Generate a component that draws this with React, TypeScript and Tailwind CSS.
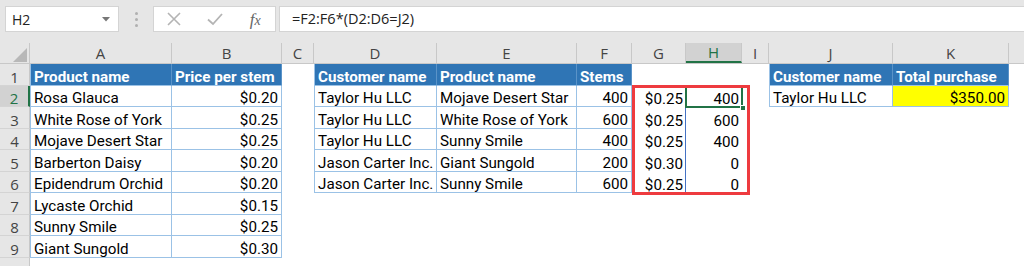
import React from "react";

type Cell = {
  text?: string;
  align?: "l" | "r";
  kind?: "none" | "head" | "body" | "yellow";
  first?: boolean;
};

const COLS = [
  { k: "A", w: 142 },
  { k: "B", w: 110 },
  { k: "C", w: 32 },
  { k: "D", w: 123 },
  { k: "E", w: 140 },
  { k: "F", w: 55 },
  { k: "G", w: 54 },
  { k: "H", w: 56 },
  { k: "I", w: 27 },
  { k: "J", w: 124 },
  { k: "K", w: 116 },
];

const tableA: [string, string][] = [
  ["Rosa Glauca", "$0.20"],
  ["White Rose of York", "$0.25"],
  ["Mojave Desert Star", "$0.25"],
  ["Barberton Daisy", "$0.20"],
  ["Epidendrum Orchid", "$0.20"],
  ["Lycaste Orchid", "$0.15"],
  ["Sunny Smile", "$0.25"],
  ["Giant Sungold", "$0.30"],
];

const tableD: [string, string, string, string, string][] = [
  ["Taylor Hu LLC", "Mojave Desert Star", "400", "$0.25", "400"],
  ["Taylor Hu LLC", "White Rose of York", "600", "$0.25", "600"],
  ["Taylor Hu LLC", "Sunny Smile", "400", "$0.25", "400"],
  ["Jason Carter Inc.", "Giant Sungold", "200", "$0.30", "0"],
  ["Jason Carter Inc.", "Sunny Smile", "600", "$0.25", "0"],
];

function buildRow(r: number): Cell[] {
  const cells: Cell[] = COLS.map(() => ({ kind: "none" }));
  if (r === 1) {
    cells[0] = { text: "Product name", kind: "head", first: true };
    cells[1] = { text: "Price per stem", kind: "head" };
  } else if (r >= 2 && r <= 9) {
    const d = tableA[r - 2];
    cells[0] = { text: d[0], kind: "body", first: true };
    cells[1] = { text: d[1], kind: "body", align: "r" };
  }
  if (r === 1) {
    cells[3] = { text: "Customer name", kind: "head", first: true };
    cells[4] = { text: "Product name", kind: "head" };
    cells[5] = { text: "Stems", kind: "head" };
  } else if (r >= 2 && r <= 6) {
    const d = tableD[r - 2];
    cells[3] = { text: d[0], kind: "body", first: true };
    cells[4] = { text: d[1], kind: "body" };
    cells[5] = { text: d[2], kind: "body", align: "r" };
    cells[6] = { text: d[3], kind: "none", align: "r" };
    cells[7] = { text: d[4], kind: "none", align: "r" };
  }
  if (r === 1) {
    cells[9] = { text: "Customer name", kind: "head", first: true };
    cells[10] = { text: "Total purchase", kind: "head" };
  } else if (r === 2) {
    cells[9] = { text: "Taylor Hu LLC", kind: "body", first: true };
    cells[10] = { text: "$350.00", kind: "yellow", align: "r" };
  }
  return cells;
}

function CellView({ c, w, col, r }: { c: Cell; w: number; col: number; r: number }) {
  let cls =
    "relative flex items-end shrink-0 h-full px-[3px] pb-0 leading-[16px] whitespace-nowrap overflow-visible ";
  if (c.kind === "head") {
    cls += "bg-[#2f75b5] text-white font-bold border-r border-b border-r-[#5a93c8] border-b-[#9bc2e6] ";
  } else if (c.kind === "body") {
    cls += "bg-white text-[#000] border-r border-b border-[#9bc2e6] ";
  } else if (c.kind === "yellow") {
    cls += "bg-[#ffff00] text-[#000] border-r border-b border-[#9bc2e6] ";
  } else {
    cls += "bg-white text-[#000] ";
  }
  if (c.first) cls += "border-l border-l-[#9bc2e6] ";
  cls += c.align === "r" ? "justify-end " : "justify-start ";
  const spill = col === 7 && r >= 2 && r <= 6;
  return (
    <div className={cls} style={{ width: w }}>
      {spill && (
        <div
          className={
            "absolute inset-y-0 left-[-1px] right-[-1px] border-l border-r border-[#4472c4] pointer-events-none " +
            (r === 6 ? "border-b" : "")
          }
        />
      )}
      <span className="relative">{c.text}</span>
    </div>
  );
}

function ColumnHeaders() {
  return (
    <div className="flex h-[21px] bg-[#e6e6e6] border-b border-[#c8c8c8] font-['Open_Sans','Noto_Sans',sans-serif] text-[15px] text-[#444]">
      <div className="relative w-[30px] shrink-0 border-r border-[#c8c8c8]">
        <svg className="absolute left-[13px] top-[5px]" width="15" height="14" viewBox="0 0 15 14">
          <polygon points="14,0 14,14 0,14" fill="#b8b8b8" />
        </svg>
      </div>
      {COLS.map((c) => (
        <div
          key={c.k}
          className={
            "shrink-0 flex items-center justify-center border-r border-[#c8c8c8] " +
            (c.k === "H" ? "bg-[#d2d2d2] text-[#217346] border-b-2 border-b-[#217346]" : "")
          }
          style={{ width: c.w }}
        >
          {c.k}
        </div>
      ))}
      <div className="flex-1" />
    </div>
  );
}

export default function App() {
  const rows = [1, 2, 3, 4, 5, 6, 7, 8, 9, 10];
  return (
    <div className="w-[1024px] h-[266px] overflow-hidden bg-white font-['Roboto',sans-serif]">
      <div className="h-[43px] bg-[#e6e6e6] flex items-start pt-[6px] pl-[5px]">
        <div className="w-[114px] h-[26px] bg-white border border-[#d4d4d4] flex items-center pl-[6px] pr-[8px] font-['Open_Sans','Noto_Sans',sans-serif] text-[14px] text-[#222]">
          <span className="flex-1">H2</span>
          <svg width="8" height="5" viewBox="0 0 8 5">
            <polygon points="0,0 8,0 4,4.5" fill="#777" />
          </svg>
        </div>
        <div className="w-[34px] h-[26px] flex flex-col items-center justify-center gap-[3px]">
          <div className="w-[3px] h-[3px] rounded-full bg-[#b0b0b0]" />
          <div className="w-[3px] h-[3px] rounded-full bg-[#b0b0b0]" />
          <div className="w-[3px] h-[3px] rounded-full bg-[#b0b0b0]" />
        </div>
        <div className="w-[123px] h-[26px] bg-white border border-[#d4d4d4] flex items-center">
          <div className="w-[40px] flex justify-center">
            <svg width="14" height="14" viewBox="0 0 14 14">
              <path d="M1 1 L13 13 M13 1 L1 13" stroke="#b4b4b4" strokeWidth="1.6" fill="none" />
            </svg>
          </div>
          <div className="w-[42px] flex justify-center">
            <svg width="16" height="14" viewBox="0 0 16 14">
              <path d="M1 7.5 L6 12 L15 2" stroke="#b4b4b4" strokeWidth="1.8" fill="none" />
            </svg>
          </div>
          <div className="w-[40px] flex justify-center font-['Liberation_Serif',serif] italic text-[17px] text-[#666] leading-none">
            <span>
              f<span className="text-[14px]">x</span>
            </span>
          </div>
        </div>
        <div className="ml-[3px] flex-1 h-[26px] bg-white border border-[#d4d4d4] border-r-0 flex items-center pl-[12px] font-['Open_Sans','Noto_Sans',sans-serif] text-[14.5px] text-[#222]">
          =F2:F6*(D2:D6=J2)
        </div>
      </div>

      <ColumnHeaders />

      <div className="relative">
        {rows.map((r) => {
          const cells = buildRow(r);
          const sel = r === 2;
          return (
            <div key={r} className="flex h-[21.5px] text-[15.2px]">
              <div
                className={
                  "w-[30px] shrink-0 flex items-end justify-center pb-0 leading-[16px] font-['Open_Sans','Noto_Sans',sans-serif] text-[15px] border-b border-[#d4d4d4] " +
                  (sel
                    ? "bg-[#d2d2d2] text-[#217346] border-r-2 border-r-[#217346]"
                    : "bg-[#e6e6e6] text-[#444] border-r border-r-[#c8c8c8]")
                }
              >
                {r}
              </div>
              {cells.map((c, i) => (
                <CellView key={i} c={c} w={COLS[i].w} col={i} r={r} />
              ))}
            </div>
          );
        })}

        <div className="absolute left-[685px] top-[22px] w-[58px] h-[22px] border-2 border-[#217346] pointer-events-none">
          <div className="absolute right-[-5px] bottom-[-5px] w-[6px] h-[6px] bg-[#217346] border border-white" />
        </div>

        <div className="absolute left-[632px] top-[21px] w-[118px] h-[110px] border-[3px] border-[#ee3b3f] pointer-events-none" />
      </div>
    </div>
  );
}
